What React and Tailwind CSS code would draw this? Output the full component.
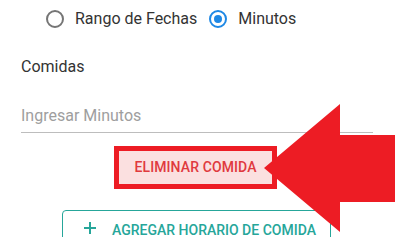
const Radio = ({ checked, label }) => (
  <label className="flex items-center gap-[11px] text-[16px] text-[#333]">
    <span
      className={
        checked
          ? 'w-[18px] h-[18px] rounded-full border-2 border-[#1e88e5] flex items-center justify-center'
          : 'w-[18px] h-[18px] rounded-full border-2 border-[#757575]'
      }
    >
      {checked && <span className="w-[8px] h-[8px] rounded-full bg-[#1e88e5]" />}
    </span>
    {label}
  </label>
);

export default function App() {
  return (
    <div
      className="relative w-[395px] h-[237px] overflow-hidden bg-white"
      style={{ fontFamily: 'Roboto, "Liberation Sans", sans-serif' }}
    >
      <div className="flex items-center gap-[12px] pl-[46px] pt-[7px] h-[31px] leading-6">
        <Radio label="Rango de Fechas" />
        <Radio checked label="Minutos" />
      </div>

      <div className="pl-[21px] mt-[24px] text-[16px] leading-6 text-[#333]">Comidas</div>

      <div className="ml-[21px] w-[352px] mt-[25px] pb-[4px] border-b border-[#bdbdbd] text-[16px] leading-6 text-[#9e9e9e]">
        Ingresar Minutos
      </div>

      <div className="ml-[114px] mt-[13px] w-[163px] h-[43px] border-[5px] border-[#ed1c24] bg-[#fbe0e0] flex items-center justify-center">
        <span className="text-[14px] font-medium tracking-[0.1px] text-[#e03a3e] uppercase">
          Eliminar Comida
        </span>
      </div>

      <div className="ml-[62px] mt-[21px] w-[269px] h-[40px] border border-[#26a69a] rounded-[4px] flex items-start pt-[7px] pl-[20px] gap-[15px] text-[#26a69a]">
        <svg width="14" height="14" viewBox="0 0 14 14" className="mt-[3px]">
          <path d="M7 1v12M1 7h12" stroke="#26a69a" strokeWidth="2" fill="none" />
        </svg>
        <span className="text-[14px] font-medium leading-6">AGREGAR HORARIO DE COMIDA</span>
      </div>

      <svg className="absolute left-0 top-0" width="395" height="237" viewBox="0 0 395 237">
        <polygon
          points="264,168 340,104 340,135 395,135 395,202 340,202 340,232"
          fill="#ed1c24"
        />
      </svg>
    </div>
  );
}
